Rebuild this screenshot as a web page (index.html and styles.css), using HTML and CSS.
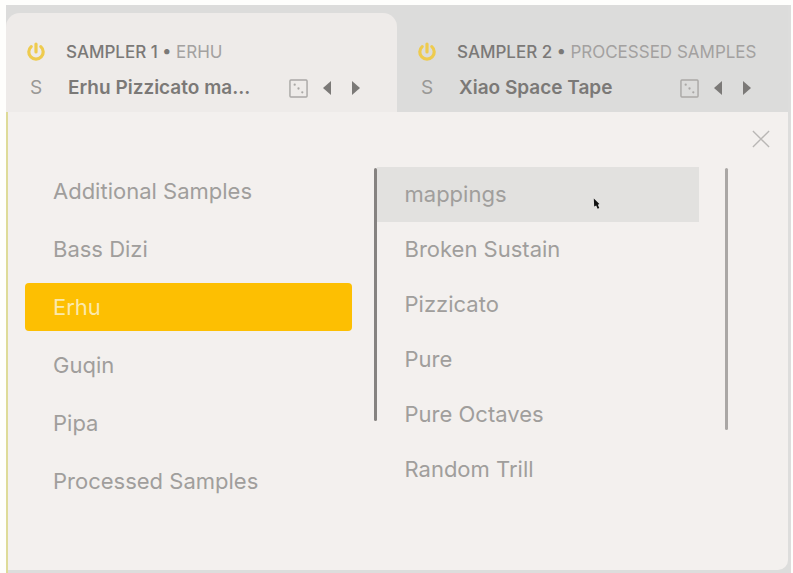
FILE: index.html
```html
<!DOCTYPE html>
<html lang="en">
<head>
<meta charset="utf-8">
<meta name="viewport" content="width=device-width, initial-scale=1">
<title>Sampler browser</title>
<link rel="stylesheet" href="styles.css">
</head>
<body>
<svg class="defs" aria-hidden="true">
  <symbol id="power" viewBox="0 0 20 20"><path d="M5.2 4.600A7.200 7.200 0 1 0 14.800 4.600M10 2v8" fill="none" stroke="currentColor" stroke-width="3.200" stroke-linecap="round"/></symbol>
  <symbol id="dice" viewBox="0 0 20 20"><rect x="1" y="1" width="18" height="18" rx="1" fill="none" stroke="currentColor" stroke-width="1.5"/><g fill="currentColor"><circle cx="6" cy="6" r="1.2"/><circle cx="10" cy="10" r="1.2"/><circle cx="14" cy="14" r="1.2"/></g></symbol>
  <symbol id="prev" viewBox="0 0 10 14"><path d="M9 0v14L1 7z" fill="currentColor"/></symbol>
  <symbol id="next" viewBox="0 0 10 14"><path d="M1 0v14l8-7z" fill="currentColor"/></symbol>
</svg>
<main class="window">
  <header class="samplers">
    <section class="sampler active">
      <button class="power" aria-label="Power sampler 1"><svg><use href="#power"/></svg></button>
      <h2 class="title">SAMPLER 1 • <span class="source">ERHU</span></h2>
      <button class="solo" aria-label="Solo sampler 1">S</button>
      <div class="preset">
        <span class="name">Erhu Pizzicato ma...</span>
        <button class="random" aria-label="Random preset"><svg><use href="#dice"/></svg></button>
        <button class="step" aria-label="Previous preset"><svg><use href="#prev"/></svg></button>
        <button class="step" aria-label="Next preset"><svg><use href="#next"/></svg></button>
      </div>
    </section>
    <section class="sampler">
      <button class="power" aria-label="Power sampler 2"><svg><use href="#power"/></svg></button>
      <h2 class="title">SAMPLER 2 • <span class="source">PROCESSED SAMPLES</span></h2>
      <button class="solo" aria-label="Solo sampler 2">S</button>
      <div class="preset">
        <span class="name">Xiao Space Tape</span>
        <button class="random" aria-label="Random preset"><svg><use href="#dice"/></svg></button>
        <button class="step" aria-label="Previous preset"><svg><use href="#prev"/></svg></button>
        <button class="step" aria-label="Next preset"><svg><use href="#next"/></svg></button>
      </div>
    </section>
  </header>
  <section class="browser">
    <button class="close" aria-label="Close"><svg viewBox="0 0 20 20"><path d="M1 1l18 18M19 1L1 19" fill="none" stroke="currentColor" stroke-width="1.5"/></svg></button>
    <div class="columns">
      <nav class="list folders" aria-label="Instruments">
        <button class="item">Additional Samples</button>
        <button class="item">Bass Dizi</button>
        <button class="item selected">Erhu</button>
        <button class="item">Guqin</button>
        <button class="item">Pipa</button>
        <button class="item">Processed Samples</button>
      </nav>
      <div class="scroll dark"></div>
      <nav class="list presets" aria-label="Articulations">
        <button class="item hovered">mappings<svg class="cursor" viewBox="0 0 10 14"><path d="M1 0l7 7-2 .8 1.800 4.200-2 .9L4 8.800 1.500 10z" fill="#111"/></svg></button>
        <button class="item">Broken Sustain</button>
        <button class="item">Pizzicato</button>
        <button class="item">Pure</button>
        <button class="item">Pure Octaves</button>
        <button class="item">Random Trill</button>
      </nav>
      <div class="scroll"></div>
    </div>
  </section>
</main>
</body>
</html>
```
FILE: styles.css
```css
* { box-sizing: border-box; }

body {
  margin: 0;
  padding: 5px 2px 0 6px;
  min-height: 100vh;
  display: flex;
  background: #fefefc;
  font-family: Inter, "Liberation Sans", sans-serif;
  color: #7b7977;
}

button {
  margin: 0;
  padding: 0;
  border: 0;
  background: none;
  color: inherit;
  font: inherit;
  text-align: left;
}

svg { display: block; }

.defs {
  position: absolute;
  width: 0;
  height: 0;
}

.window {
  flex: 1;
  display: flex;
  flex-direction: column;
  padding: 0 3px 3px 2px;
  background: linear-gradient(to right, #dedb98 2px, #dddddc 2px);
}

.samplers {
  display: grid;
  grid-template-columns: minmax(0, 1fr) minmax(0, 1fr);
  margin-left: -2px;
  background: #dcdcdb;
}

.sampler {
  display: grid;
  grid-template-columns: 20px minmax(0, 1fr);
  column-gap: 20px;
  row-gap: 10px;
  align-items: center;
  margin-top: 8px;
  padding: 26px 36px 11px 20px;
}

.active {
  background: #eeebe9;
  border-radius: 14px 14px 0 0;
}

.power {
  color: #eecb4e;
}

.power svg {
  width: 20px;
  height: 20px;
}

.title {
  margin: 0;
  font-size: 17px;
  line-height: 26px;
  font-weight: 500;
  white-space: nowrap;
}

.source {
  font-weight: 400;
  color: #a3a1a0;
}

.solo {
  padding-left: 4px;
  font-size: 19px;
  line-height: 26px;
  color: #999896;
}

.preset {
  display: flex;
  align-items: center;
}

.name {
  flex: 1;
  padding-left: 2px;
  font-size: 19px;
  line-height: 26px;
  font-weight: 600;
  white-space: nowrap;
}

.random {
  color: #aaa8a6;
}

.random svg {
  width: 19px;
  height: 19px;
}

.step {
  margin-left: 14px;
}

.step + .step {
  margin-left: 19px;
}

.step svg {
  width: 10px;
  height: 14px;
}

.browser {
  flex: 1;
  display: flex;
  flex-direction: column;
  padding: 18px 18px 46px 17px;
  background: #f3f0ee;
  border-radius: 0 0 10px 0;
}

.close {
  align-self: flex-end;
  color: #b9b7b5;
}

.close svg {
  width: 18px;
  height: 18px;
}

.columns {
  display: grid;
  grid-template-columns: 1fr 3px 1fr 3px;
  margin: 19px 42px 0 0;
}

.list {
  display: flex;
  flex-direction: column;
  color: #a09e9c;
  font-size: 22px;
}

.folders {
  gap: 10px;
  margin-right: 22px;
}

.folders .item {
  padding-left: 28px;
  line-height: 48px;
}

.presets {
  margin-right: 26px;
}

.presets .item {
  position: relative;
  padding-left: 28px;
  line-height: 55px;
}

.folders .selected {
  background: #fdbf02;
  border-radius: 4px;
  color: #fbe9ac;
}

.presets .hovered {
  background: #e2e1df;
}

.cursor {
  position: absolute;
  left: 67%;
  top: 31px;
  width: 8px;
  height: 12px;
}

.scroll {
  height: 262px;
  margin-top: 1px;
  border-radius: 2px;
  background: #aaa7a5;
}

.scroll.dark {
  height: 253px;
  background: #858280;
}
```
